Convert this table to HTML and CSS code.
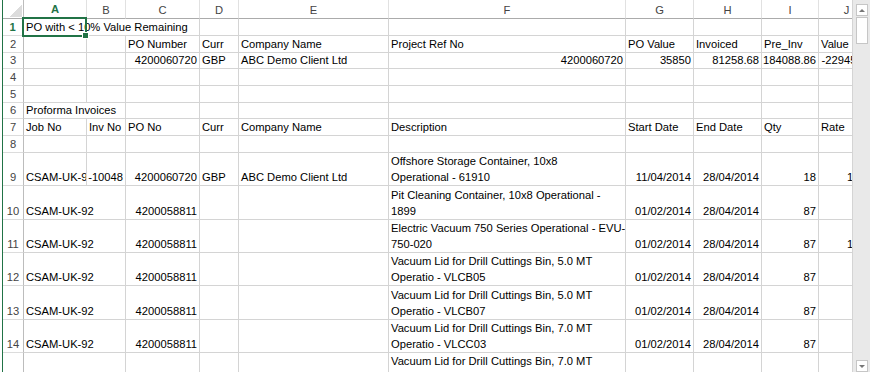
FILE: index.html
```html
<!DOCTYPE html>
<html lang="en">
<head>
<meta charset="utf-8">
<title>Excel - PO with &lt; 10% Value Remaining</title>
<link rel="stylesheet" href="styles.css">
</head>
<body>
<div class="app">
  <div class="sheet">
    <div class="grid">
      <div class="corner"><span class="tri"></span></div>
      <div class="ch sel">A</div><div class="ch">B</div><div class="ch">C</div><div class="ch">D</div><div class="ch">E</div><div class="ch">F</div><div class="ch">G</div><div class="ch">H</div><div class="ch">I</div><div class="ch">J</div>

      <div class="rh sel">1</div>
      <div class="c s3">PO with &lt; 10% Value Remaining</div>
      <div class="c"></div><div class="c"></div><div class="c"></div><div class="c"></div><div class="c"></div><div class="c"></div><div class="c"></div>

      <div class="rh">2</div>
      <div class="c"></div><div class="c"></div>
      <div class="c">PO Number</div><div class="c">Curr</div><div class="c">Company Name</div><div class="c">Project Ref No</div><div class="c">PO Value</div><div class="c">Invoiced</div><div class="c">Pre_Inv</div><div class="c">Value</div>

      <div class="rh">3</div>
      <div class="c"></div><div class="c"></div>
      <div class="c n">4200060720</div><div class="c">GBP</div><div class="c">ABC Demo Client Ltd</div><div class="c n">4200060720</div><div class="c n">35850</div><div class="c n">81258.68</div><div class="c n">184088.86</div><div class="c n">-22945.18</div>

      <div class="rh">4</div>
      <div class="c"></div><div class="c"></div><div class="c"></div><div class="c"></div><div class="c"></div><div class="c"></div><div class="c"></div><div class="c"></div><div class="c"></div><div class="c"></div>

      <div class="rh">5</div>
      <div class="c"></div><div class="c"></div><div class="c"></div><div class="c"></div><div class="c"></div><div class="c"></div><div class="c"></div><div class="c"></div><div class="c"></div><div class="c"></div>

      <div class="rh">6</div>
      <div class="c s2">Proforma Invoices</div>
      <div class="c"></div><div class="c"></div><div class="c"></div><div class="c"></div><div class="c"></div><div class="c"></div><div class="c"></div><div class="c"></div>

      <div class="rh">7</div>
      <div class="c">Job No</div><div class="c">Inv No</div><div class="c">PO No</div><div class="c">Curr</div><div class="c">Company Name</div><div class="c">Description</div><div class="c">Start Date</div><div class="c">End Date</div><div class="c">Qty</div><div class="c">Rate</div>

      <div class="rh">8</div>
      <div class="c"></div><div class="c"></div><div class="c"></div><div class="c"></div><div class="c"></div><div class="c"></div><div class="c"></div><div class="c"></div><div class="c"></div><div class="c"></div>

      <div class="rh">9</div>
      <div class="c">CSAM-UK-92</div><div class="c n">-10048</div><div class="c n">4200060720</div><div class="c">GBP</div><div class="c">ABC Demo Client Ltd</div>
      <div class="c">Offshore Storage Container, 10x8<br>Operational - 61910</div>
      <div class="c n">11/04/2014</div><div class="c n">28/04/2014</div><div class="c n">18</div><div class="c n">1450</div>

      <div class="rh">10</div>
      <div class="c s2">CSAM-UK-92</div><div class="c n">4200058811</div><div class="c"></div><div class="c"></div>
      <div class="c">Pit Cleaning Container, 10x8 Operational -<br>1899</div>
      <div class="c n">01/02/2014</div><div class="c n">28/04/2014</div><div class="c n">87</div><div class="c n">95</div>

      <div class="rh">11</div>
      <div class="c s2">CSAM-UK-92</div><div class="c n">4200058811</div><div class="c"></div><div class="c"></div>
      <div class="c">Electric Vacuum 750 Series Operational - EVU-<br>750-020</div>
      <div class="c n">01/02/2014</div><div class="c n">28/04/2014</div><div class="c n">87</div><div class="c n">1250</div>

      <div class="rh">12</div>
      <div class="c s2">CSAM-UK-92</div><div class="c n">4200058811</div><div class="c"></div><div class="c"></div>
      <div class="c">Vacuum Lid for Drill Cuttings Bin, 5.0 MT<br>Operatio - VLCB05</div>
      <div class="c n">01/02/2014</div><div class="c n">28/04/2014</div><div class="c n">87</div><div class="c n">65</div>

      <div class="rh">13</div>
      <div class="c s2">CSAM-UK-92</div><div class="c n">4200058811</div><div class="c"></div><div class="c"></div>
      <div class="c">Vacuum Lid for Drill Cuttings Bin, 5.0 MT<br>Operatio - VLCB07</div>
      <div class="c n">01/02/2014</div><div class="c n">28/04/2014</div><div class="c n">87</div><div class="c n">65</div>

      <div class="rh">14</div>
      <div class="c s2">CSAM-UK-92</div><div class="c n">4200058811</div><div class="c"></div><div class="c"></div>
      <div class="c">Vacuum Lid for Drill Cuttings Bin, 7.0 MT<br>Operatio - VLCC03</div>
      <div class="c n">01/02/2014</div><div class="c n">28/04/2014</div><div class="c n">87</div><div class="c n">65</div>

      <div class="rh">15</div>
      <div class="c s2">CSAM-UK-92</div><div class="c n">4200058811</div><div class="c"></div><div class="c"></div>
      <div class="c">Vacuum Lid for Drill Cuttings Bin, 7.0 MT<br>Operatio - VLCC05</div>
      <div class="c n">01/02/2014</div><div class="c n">28/04/2014</div><div class="c n">87</div><div class="c n">65</div>
    </div>
    <div class="selection"><span class="handle"></span></div>
  </div>
  <div class="vscroll">
    <div class="btn"><span class="arrow-up"></span></div>
    <div class="thumb"></div>
    <div class="track"></div>
    <div class="btn"><span class="arrow-down"></span></div>
  </div>
</div>
</body>
</html>
```
FILE: styles.css
```css
html, body {
  margin: 0;
  padding: 0;
}
body {
  width: 870px;
  height: 372px;
  overflow: hidden;
  background: #ffffff;
  font-family: "Liberation Sans", Arial, sans-serif;
  font-size: 11.2px;
  color: #000000;
}
.app {
  display: flex;
  height: 372px;
  padding-left: 2px;
  box-sizing: border-box;
}
.sheet {
  position: relative;
  width: 851px;
  box-sizing: border-box;
  border-left: 1px solid #217346;
  border-right: 1px solid #d4d4d4;
  overflow: hidden;
  flex: none;
}
.grid {
  display: grid;
  grid-template-columns: 21px 63px 39px 74px 39px 150px 237px 68px 68px 57px 56px;
  grid-template-rows: 19px 17px 17px 16px 17px 17px 16px 17px 17px 33px 34px 33px 33px 34px 33px 33px;
  width: max-content;
}
.grid > div {
  box-sizing: border-box;
  min-width: 0;
  overflow: hidden;
  white-space: nowrap;
  line-height: 16px;
  display: flex;
  align-items: flex-end;
}
.c {
  border-right: 1px solid #d4d4d4;
  border-bottom: 1px solid #d4d4d4;
  padding: 0 2px;
}
.n {
  justify-content: flex-end;
}
.s2 { grid-column: span 2; }
.s3 { grid-column: span 3; }

.corner {
  border-right: 1px solid #bcbcbc;
  border-bottom: 1px solid #ababab;
  justify-content: flex-end;
  padding: 0 1px 1px 0;
}
.tri {
  width: 12px;
  height: 12px;
  background: linear-gradient(to bottom right, transparent 50%, #dcdcdc 50%);
}
.ch {
  justify-content: center;
  color: #444444;
  border-right: 1px solid #e1e1e1;
  border-bottom: 1px solid #ababab;
}
.ch.sel {
  color: #217346;
  font-weight: bold;
  border-bottom: 2px solid #217346;
}
.rh {
  justify-content: center;
  color: #444444;
  border-right: 1px solid #bcbcbc;
  border-bottom: 1px solid #dcdcdc;
}
.rh.sel {
  color: #217346;
  font-weight: bold;
  border-right: 2px solid #217346;
}

.selection {
  position: absolute;
  left: 19px;
  top: 17px;
  width: 65px;
  height: 20px;
  box-sizing: border-box;
  border: 2px solid #217346;
  pointer-events: none;
}
.handle {
  position: absolute;
  right: -4px;
  bottom: -4px;
  width: 5px;
  height: 5px;
  background: #217346;
  border: 1px solid #ffffff;
}

.vscroll {
  width: 17px;
  flex: none;
  display: flex;
  flex-direction: column;
  align-items: center;
  background: #e9e9e9;
  padding-top: 4px;
  box-sizing: border-box;
}
.btn {
  width: 12px;
  height: 12px;
  box-sizing: border-box;
  border: 1px solid #c6c6c6;
  background: #ffffff;
  display: flex;
  align-items: center;
  justify-content: center;
  flex: none;
}
.arrow-up {
  width: 0;
  height: 0;
  border-left: 3px solid transparent;
  border-right: 3px solid transparent;
  border-bottom: 3px solid #777777;
}
.arrow-down {
  width: 0;
  height: 0;
  border-left: 3px solid transparent;
  border-right: 3px solid transparent;
  border-top: 3px solid #777777;
}
.thumb {
  width: 12px;
  height: 27px;
  margin-top: 1px;
  box-sizing: border-box;
  border: 1px solid #c6c6c6;
  background: #ffffff;
  flex: none;
}
.track {
  flex: 1;
}
```
